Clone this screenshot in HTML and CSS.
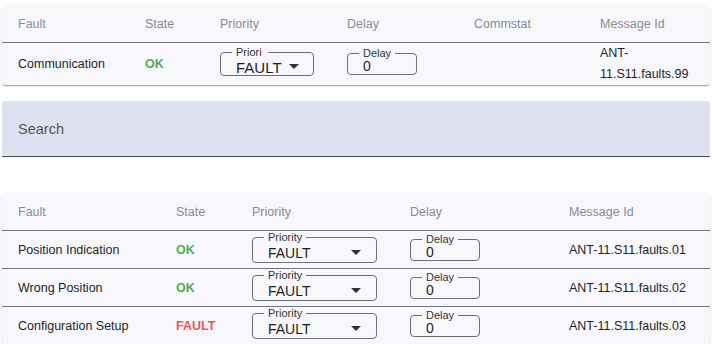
FILE: index.html
```html
<!DOCTYPE html>
<html lang="en">
<head>
  <meta charset="UTF-8">
  <title>Faults</title>
  <link rel="stylesheet" href="styles.css">
</head>
<body>

  <!-- Communication fault -->
  <div class="paper t1">
    <table>
      <colgroup>
        <col style="width:127px"><col style="width:75px"><col style="width:127px">
        <col style="width:127px"><col style="width:126px"><col style="width:126px">
      </colgroup>
      <thead>
        <tr><th>Fault</th><th>State</th><th>Priority</th><th>Delay</th><th>Commstat</th><th>Message Id</th></tr>
      </thead>
      <tbody>
        <tr>
          <td>Communication</td>
          <td class="ok">OK</td>
          <td>
            <fieldset class="field pri">
              <legend>Priori</legend>
              <span class="val">FAULT</span><span class="caret"></span>
            </fieldset>
          </td>
          <td>
            <fieldset class="field delay">
              <legend>Delay</legend>
              <span class="val">0</span>
            </fieldset>
          </td>
          <td></td>
          <td class="msg">ANT-11.S11.faults.99</td>
        </tr>
      </tbody>
    </table>
  </div>

  <div class="search">Search</div>

  <!-- Other faults -->
  <div class="paper t2">
    <table>
      <colgroup>
        <col style="width:158px"><col style="width:76px"><col style="width:158px">
        <col style="width:159px"><col style="width:157px">
      </colgroup>
      <thead>
        <tr><th>Fault</th><th>State</th><th>Priority</th><th>Delay</th><th>Message Id</th></tr>
      </thead>
      <tbody>
        <tr>
          <td>Position Indication</td>
          <td class="ok">OK</td>
          <td><fieldset class="field pri"><legend>Priority</legend><span class="val">FAULT</span><span class="caret"></span></fieldset></td>
          <td><fieldset class="field delay"><legend>Delay</legend><span class="val">0</span></fieldset></td>
          <td>ANT-11.S11.faults.01</td>
        </tr>
        <tr>
          <td>Wrong Position</td>
          <td class="ok">OK</td>
          <td><fieldset class="field pri"><legend>Priority</legend><span class="val">FAULT</span><span class="caret"></span></fieldset></td>
          <td><fieldset class="field delay"><legend>Delay</legend><span class="val">0</span></fieldset></td>
          <td>ANT-11.S11.faults.02</td>
        </tr>
        <tr>
          <td>Configuration Setup</td>
          <td class="bad">FAULT</td>
          <td><fieldset class="field pri"><legend>Priority</legend><span class="val">FAULT</span><span class="caret"></span></fieldset></td>
          <td><fieldset class="field delay"><legend>Delay</legend><span class="val">0</span></fieldset></td>
          <td>ANT-11.S11.faults.03</td>
        </tr>
      </tbody>
    </table>
  </div>

</body>
</html>
```

FILE: styles.css
```css
/* ========== Base ========== */
body {
  margin: 0;
  padding: 5px 2px;
  background: #fff;
  font-family: "Liberation Sans", Arial, sans-serif;
  font-size: 12.5px;
  color: #1e1e1e;
}

/* ========== Tables ========== */
.paper {
  background: #f8f8fc;
  border-radius: 4px;
  box-shadow: 0 2px 1px -1px rgba(0,0,0,0.2), 0 1px 1px 0 rgba(0,0,0,0.14), 0 1px 3px 0 rgba(0,0,0,0.12);
}
table {
  width: 100%;
  border-collapse: collapse;
  table-layout: fixed;
}
th {
  height: 37px;
  padding: 0 16px;
  text-align: left;
  font-weight: normal;
  color: #8a8a94;
  border-bottom: 1px solid #74747f;
}
td {
  padding: 0 16px;
  vertical-align: middle;
}
.t1 td {
  height: 42px;
  line-height: 21px;
}
.t2 td {
  height: 37px;
  border-bottom: 1px solid #74747f;
}
.ok {
  color: #4caf50;
  font-weight: bold;
}
.bad {
  color: #ef5350;
  font-weight: bold;
}

/* ========== Outlined fields ========== */
.field {
  margin: 0 0 4px;
  min-width: 0;
  border: 1px solid #6e6e76;
  border-radius: 4px;
  display: flex;
  align-items: center;
  justify-content: space-between;
  box-sizing: border-box;
}
.t1 .field {
  margin-bottom: 6px;
}
.field legend {
  font-size: 11px;
  line-height: 11px;
  padding: 0 4px;
  margin-left: -4px;
  color: #333;
  white-space: nowrap;
}
.field .val {
  font-size: 14px;
  color: #1e1e1e;
}
.pri {
  padding: 3px 15px 2px 15px;
}
.pri .val {
  line-height: 14px;
}
.t1 .pri {
  width: 94px;
  padding: 2px 14px 0 15px;
}
.t1 .pri .val {
  font-size: 15px;
  line-height: 15px;
}
.t1 .pri legend {
  padding-right: 6px;
}
.t2 .pri {
  width: 125px;
}
.delay {
  width: 70px;
  padding: 0 8px 0 15px;
}
.delay .val {
  line-height: 15px;
}
.caret {
  width: 0;
  height: 0;
  border-left: 5px solid transparent;
  border-right: 5px solid transparent;
  border-top: 5px solid #333;
  margin-bottom: 2px;
}

/* ========== Search ========== */
.search {
  margin: 16px 0 36px;
  height: 55px;
  padding-left: 16px;
  display: flex;
  align-items: center;
  background: #dee1ef;
  border-radius: 4px 4px 0 0;
  border-bottom: 1px solid #4a4a55;
  color: #555;
  font-size: 14.5px;
}
```
